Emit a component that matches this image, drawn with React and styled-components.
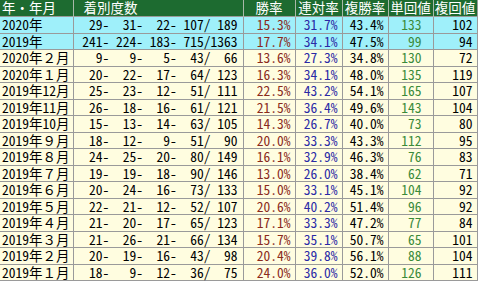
import React from 'react';
import styled, { createGlobalStyle } from 'styled-components';

const GlobalStyle = createGlobalStyle`
  html, body {
    margin: 0;
    padding: 0;
    background: #ffffff;
  }
`;

const Table = styled.table`
  border-collapse: collapse;
  table-layout: fixed;
  width: 477px;
  font-family: "Noto Sans Mono CJK JP", "Noto Sans CJK JP", "Liberation Mono", monospace;
  font-size: 13.5px;
  border-right: 1px solid #9a9a9a;
  border-bottom: 1px solid #9a9a9a;
`;

const Row = styled.tr`
  height: 16.5px;
  background: ${p => p.$kind === 'head' ? '#1d6b30' : p.$kind === 'year' ? '#9ff0fa' : '#fffde0'};
`;

const HeadCell = styled.th`
  padding: 0 ${p => p.$pad || 0}px;
  font-weight: normal;
  color: #ffffff;
  line-height: 15.5px;
  text-align: ${p => p.$align || 'center'};
  white-space: nowrap;
  border-left: 1px solid #a8b8a8;
  &:first-child { border-left: none; }
`;

const Cell = styled.td`
  padding: 0 ${p => p.$pad || 4}px;
  line-height: 15.5px;
  color: ${p => p.$color || '#000000'};
  text-align: ${p => p.$align || 'right'};
  white-space: pre;
  border-left: 1px solid #9a9a9a;
  border-top: 1px solid #9a9a9a;
  &:first-child { border-left: none; }
`;

const widths = [73, 170, 52, 47, 46, 45, 44];

const heads = ['年・年月', '着別度数', '勝率', '連対率', '複勝率', '単回値', '複回値'];

// label, 1着, 2着, 3着, 着外, 計, 勝率, 連対率, 複勝率, 単回値, 複回値
const data = [
  ['2020年', 29, 31, 22, 107, 189, '15.3%', '31.7%', '43.4%', 133, 102, 'year'],
  ['2019年', 241, 224, 183, 715, 1363, '17.7%', '34.1%', '47.5%', 99, 94, 'year'],
  ['2020年２月', 9, 9, 5, 43, 66, '13.6%', '27.3%', '34.8%', 130, 72],
  ['2020年１月', 20, 22, 17, 64, 123, '16.3%', '34.1%', '48.0%', 135, 119],
  ['2019年12月', 25, 23, 12, 51, 111, '22.5%', '43.2%', '54.1%', 165, 107],
  ['2019年11月', 26, 18, 16, 61, 121, '21.5%', '36.4%', '49.6%', 143, 104],
  ['2019年10月', 15, 13, 14, 63, 105, '14.3%', '26.7%', '40.0%', 73, 80],
  ['2019年９月', 18, 12, 9, 51, 90, '20.0%', '33.3%', '43.3%', 112, 95],
  ['2019年８月', 24, 25, 20, 80, 149, '16.1%', '32.9%', '46.3%', 76, 83],
  ['2019年７月', 19, 19, 18, 90, 146, '13.0%', '26.0%', '38.4%', 62, 71],
  ['2019年６月', 20, 24, 16, 73, 133, '15.0%', '33.1%', '45.1%', 104, 92],
  ['2019年５月', 22, 21, 12, 52, 107, '20.6%', '40.2%', '51.4%', 96, 92],
  ['2019年４月', 21, 20, 17, 65, 123, '17.1%', '33.3%', '47.2%', 77, 84],
  ['2019年３月', 21, 26, 21, 66, 134, '15.7%', '35.1%', '50.7%', 65, 101],
  ['2019年２月', 20, 19, 16, 43, 98, '20.4%', '39.8%', '56.1%', 88, 104],
  ['2019年１月', 18, 9, 12, 36, 75, '24.0%', '36.0%', '52.0%', 126, 111],
];

const pad = (n, w) => String(n).padStart(w, ' ');

const chakubetsu = r =>
  `${pad(r[1], 3)}- ${pad(r[2], 3)}- ${pad(r[3], 3)}- ${pad(r[4], 3)}/${pad(r[5], 4)}`;

class App extends React.Component {
  render() {
    return (
      <>
        <GlobalStyle />
        <Table>
          <colgroup>
            {widths.map((w, i) => <col key={i} style={{ width: w }} />)}
          </colgroup>
          <thead>
            <Row $kind="head">
              <HeadCell $align="left" $pad={2}>{heads[0]}</HeadCell>
              <HeadCell $align="left" $pad={10}>{heads[1]}</HeadCell>
              {heads.slice(2).map(h => <HeadCell key={h}>{h}</HeadCell>)}
            </Row>
          </thead>
          <tbody>
            {data.map((r, i) => (
              <Row key={i} $kind={r[11] || 'month'}>
                <Cell $align="left" $pad={2}>{r[0]}</Cell>
                <Cell $pad={5}>{chakubetsu(r)}</Cell>
                <Cell $color="#8a2a1c">{r[6]}</Cell>
                <Cell $color="#2a2aa6">{r[7]}</Cell>
                <Cell>{r[8]}</Cell>
                <Cell $color="#3a8a3a" $pad={11}>{r[9]}</Cell>
                <Cell>{r[10]}</Cell>
              </Row>
            ))}
          </tbody>
        </Table>
      </>
    );
  }
}

export default App;
